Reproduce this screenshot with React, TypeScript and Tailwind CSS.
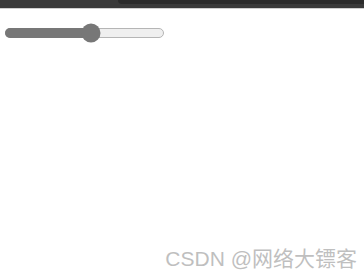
export default function App() {
  const value = 54
  return (
    <div className="relative w-[364px] h-[276px] bg-white overflow-hidden">
      <div className="relative h-[9px] bg-[#3a3a3a] border-b border-[#cfcfcf]">
        <div className="absolute left-[118px] right-0 top-0 h-[4px] bg-[#2b2b2b] rounded-bl-[10px]" />
      </div>
      <div className="pl-[5px] pt-[19px]">
        <div className="relative w-[159px] h-[10px] rounded-full bg-[#efefef] border border-[#b5b5b5]">
          <div className="absolute -left-px -top-px h-[10px] rounded-l-full bg-[#777777]" style={{ width: `${value}%` }} />
          <div
            className="absolute top-1/2 w-[19px] h-[19px] -translate-x-1/2 -translate-y-1/2 rounded-full bg-[#777777]"
            style={{ left: `${value}%` }}
          />
        </div>
      </div>
      <div className="absolute right-[7px] bottom-[7px] text-[21px] text-[#bfbfbf] font-['Liberation_Sans','Noto_Sans_CJK_SC',sans-serif] leading-none">
        CSDN @网络大镖客
      </div>
    </div>
  )
}
